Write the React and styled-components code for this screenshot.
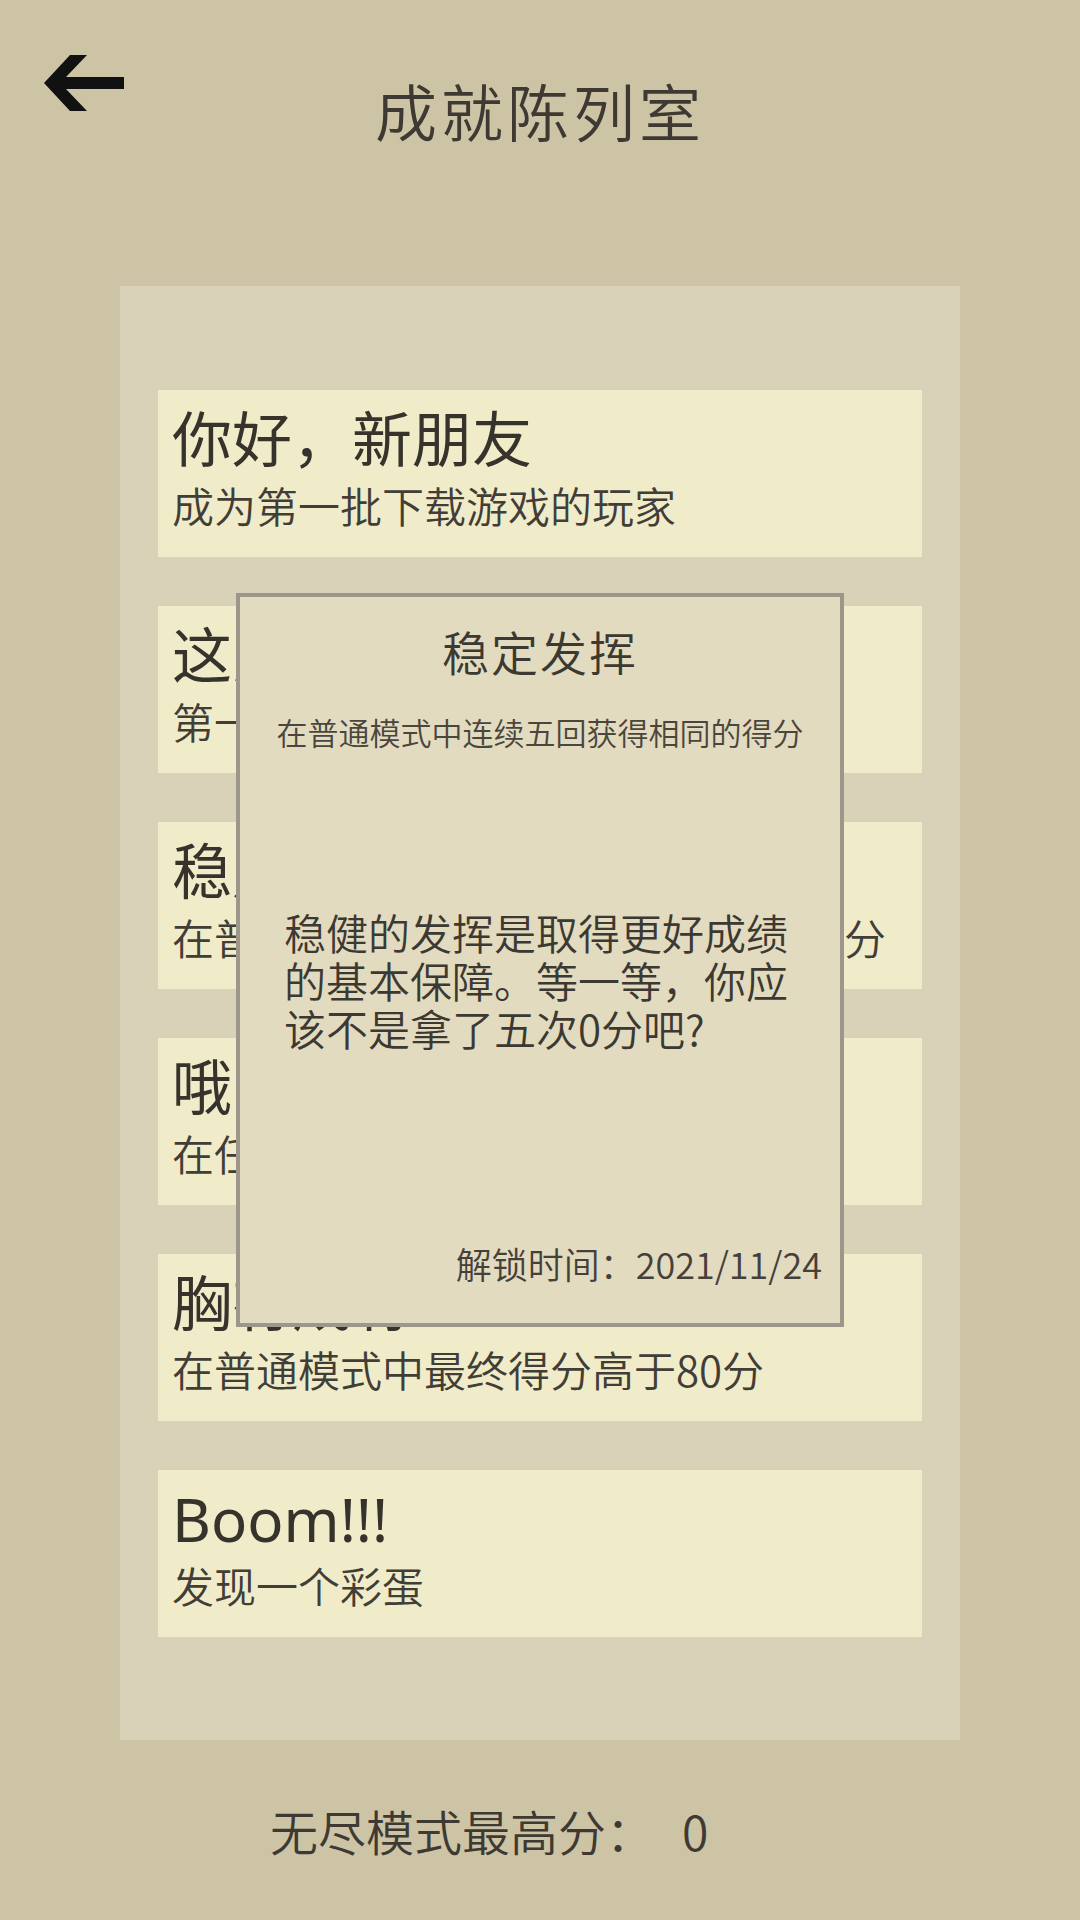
import styled, { createGlobalStyle } from 'styled-components';

const achievements = [
  { title: '你好，新朋友', desc: '成为第一批下载游戏的玩家' },
  { title: '这只是开始', desc: '第一次完成一局普通模式' },
  { title: '稳定发挥', desc: '在普通模式中连续五回获得相同的得分' },
  { title: '哦，不！', desc: '在任意模式中得到0分' },
  { title: '胸有成竹', desc: '在普通模式中最终得分高于80分' },
  { title: 'Boom!!!', desc: '发现一个彩蛋' },
];

const detail = {
  title: '稳定发挥',
  desc: '在普通模式中连续五回获得相同的得分',
  story: '稳健的发挥是取得更好成绩的基本保障。等一等，你应该不是拿了五次0分吧?',
  unlocked: '2021/11/24',
};

const BackArrow = () => (
  <svg width='80' height='56' viewBox='0 0 80 56' aria-hidden='true'>
    <polygon
      points='0,28 26,0 43,0 22,22 80,22 80,34 22,34 43,56 26,56'
      fill='#111'
    />
  </svg>
);

export default () => (
  <>
    <GlobalStyle />
    <Page>
      <Header>
        <BackButton aria-label='返回'>
          <BackArrow />
        </BackButton>
        <Title>成就陈列室</Title>
        <span />
      </Header>

      <Panel>
        {achievements.map((a) => (
          <Card key={a.title}>
            <CardTitle>{a.title}</CardTitle>
            <CardDesc>{a.desc}</CardDesc>
          </Card>
        ))}
      </Panel>

      <Footer>
        无尽模式最高分：<Score>0</Score>
      </Footer>

      <Dialog>
        <DialogTitle>{detail.title}</DialogTitle>
        <DialogDesc>{detail.desc}</DialogDesc>
        <DialogStory>{detail.story}</DialogStory>
        <UnlockTime>解锁时间：{detail.unlocked}</UnlockTime>
      </Dialog>
    </Page>
  </>
);

const GlobalStyle = createGlobalStyle`
  html, body {
    margin: 0;
    background: #cdc4a6;
  }
  body {
    font-family: "Noto Sans CJK SC", "Noto Sans", sans-serif;
    font-weight: 350;
    color: #3c3832;
  }
`;

const Page = styled.div`
  position: relative;
  width: 1080px;
  min-height: 1920px;
  background: #cdc4a6;
`;

const Header = styled.header`
  display: grid;
  grid-template-columns: 1fr auto 1fr;
  align-items: start;
  height: 286px;
  padding: 0 44px;
  box-sizing: border-box;
`;

const BackButton = styled.button`
  justify-self: start;
  margin-top: 55px;
  padding: 0;
  border: none;
  background: none;
  line-height: 0;
  cursor: pointer;
`;

const Title = styled.h1`
  margin: 79px 0 0;
  font-size: 62px;
  line-height: 62px;
  font-weight: 350;
  letter-spacing: 4px;
  color: #3e3a33;
`;

const Panel = styled.section`
  display: flex;
  flex-direction: column;
  gap: 49px;
  margin: 0 120px;
  padding: 104px 38px 103px;
  background: #d9d2b9;
`;

const Card = styled.div`
  height: 167px;
  box-sizing: border-box;
  padding: 19px 14px 0;
  background: #f0ecc9;
`;

const CardTitle = styled.div`
  font-family: "Noto Sans", "Noto Sans CJK SC", sans-serif;
  font-stretch: condensed;
  font-weight: 400;
  font-size: 60px;
  line-height: 60px;
  color: #36322c;
`;

const CardDesc = styled.div`
  margin-top: 15px;
  font-size: 42px;
  line-height: 42px;
  white-space: nowrap;
  color: #423e37;
`;

const Footer = styled.div`
  padding: 66px 0 0 270px;
  font-size: 48px;
  line-height: 48px;
  color: #3e3a33;
`;

const Score = styled.span`
  margin-left: 28px;
`;

const Dialog = styled.div`
  position: absolute;
  top: 593px;
  left: 236px;
  width: 608px;
  height: 734px;
  box-sizing: border-box;
  display: flex;
  flex-direction: column;
  padding: 30px 18px 42px 44px;
  background: #e2dbbf;
  border: 4px solid #9d968a;
`;

const DialogTitle = styled.h2`
  margin: 0 0 0 -26px;
  text-align: center;
  font-size: 47px;
  line-height: 47px;
  font-weight: 350;
  letter-spacing: 2px;
  color: #3c3832;
`;

const DialogDesc = styled.p`
  margin: 42px 0 0 -26px;
  text-align: center;
  font-size: 31px;
  line-height: 31px;
  white-space: nowrap;
  color: #4a463e;
`;

const DialogStory = styled.p`
  margin: 161px 0 0;
  width: 512px;
  font-size: 42px;
  line-height: 48px;
  color: #3c3832;
`;

const UnlockTime = styled.div`
  margin-top: auto;
  text-align: right;
  font-size: 36px;
  line-height: 36px;
  color: #45413a;
`;
